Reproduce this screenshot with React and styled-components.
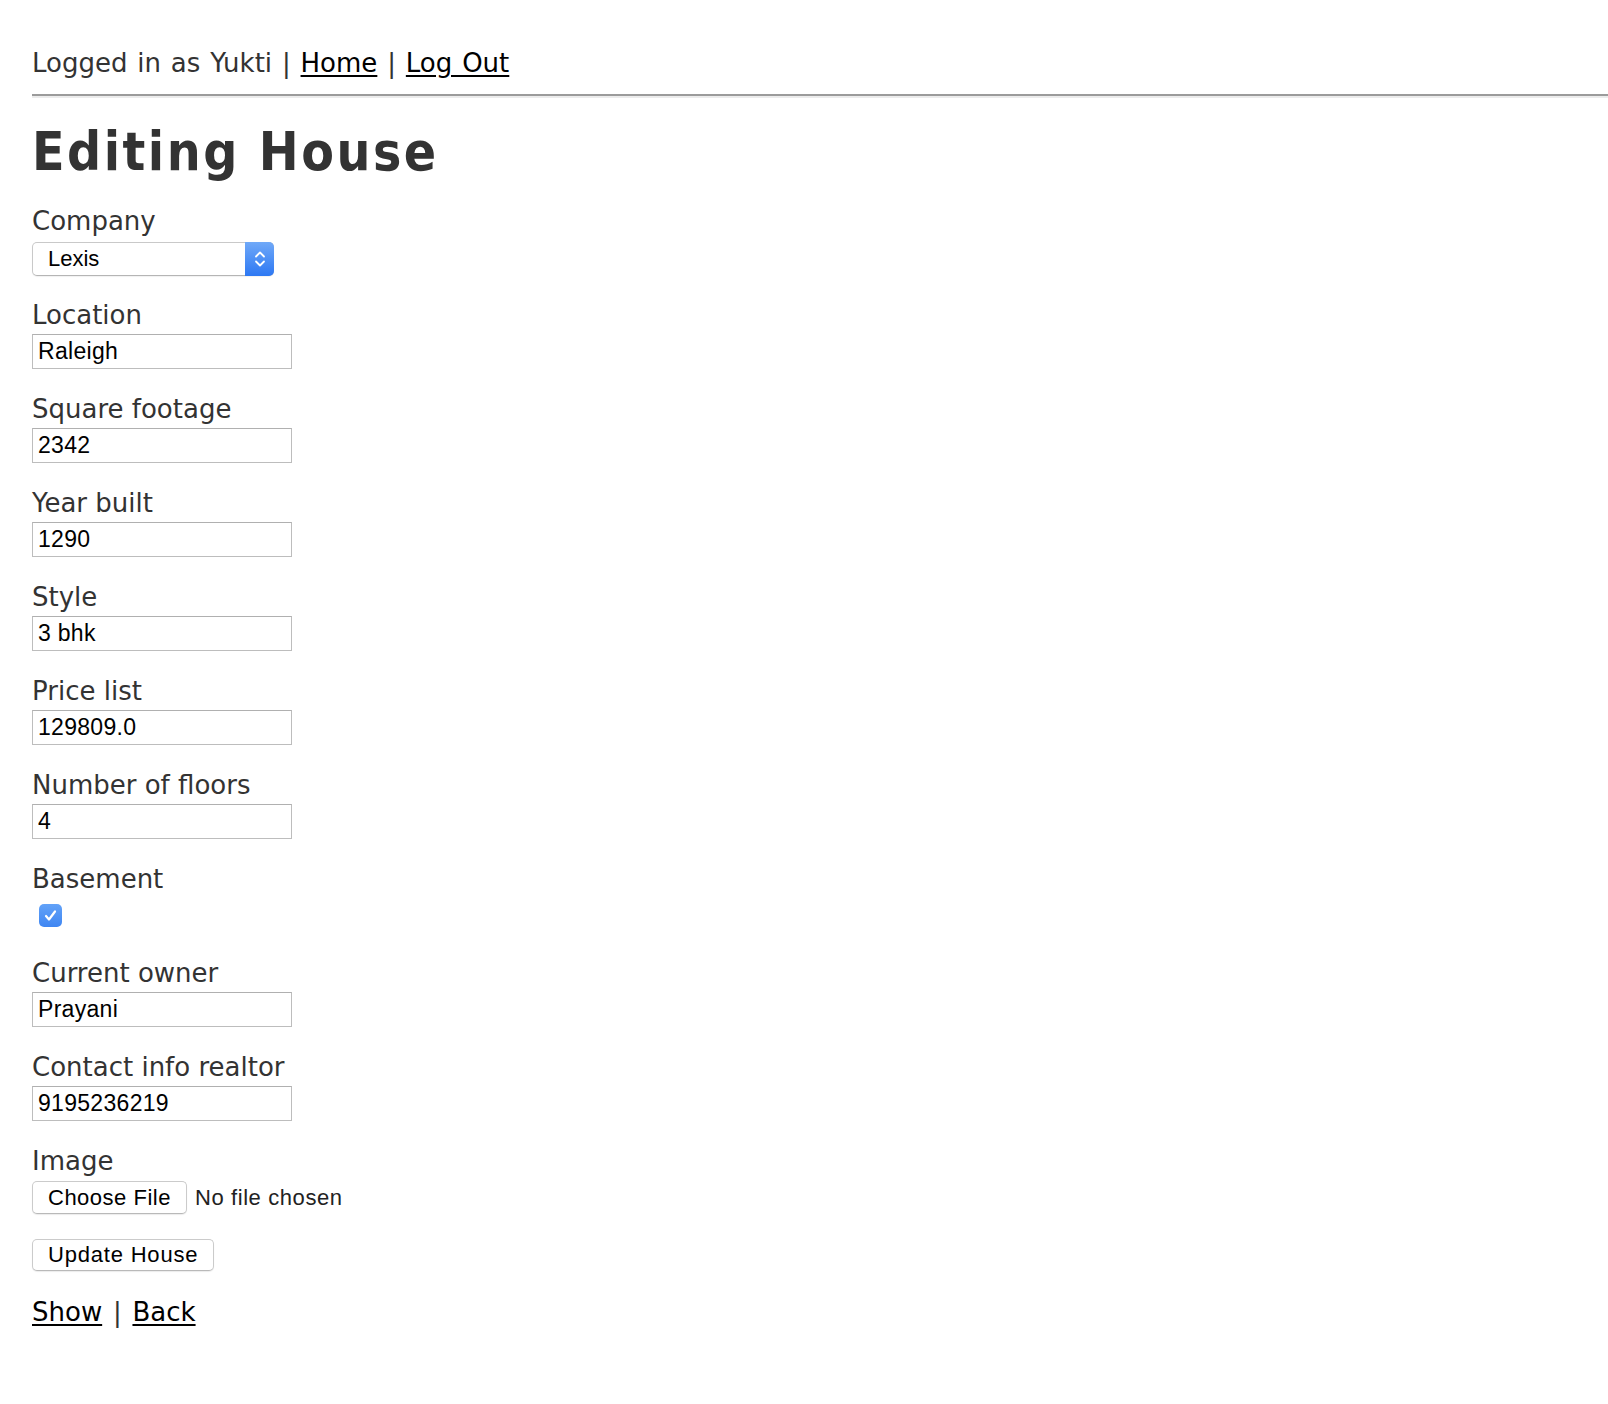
import React from 'react';
import styled, { createGlobalStyle } from 'styled-components';

const GlobalStyle = createGlobalStyle`
  html, body { margin: 0; padding: 0; background: #fff; }
  body { font-family: "DejaVu Sans", Verdana, sans-serif; color: #333; }
`;

const Page = styled.div`
  padding: 45px 0 60px 32px;
`;

const UserBar = styled.div`
  font-size: 26px;
  line-height: 36px;
  word-spacing: 1.6px;
  margin-bottom: 13px;
  color: #333;
`;

const Link = styled.a`
  color: #000;
  text-decoration: underline;
  text-underline-offset: 3px;
  cursor: pointer;
`;

const Rule = styled.hr`
  margin: 0;
  height: 0;
  border: none;
  border-top: 2px solid #9b9b9b;
  border-bottom: 2px solid #ececec;
`;

const Title = styled.h1`
  margin: 22px 0 19px;
  font-size: 53px;
  line-height: 64px;
  font-weight: bold;
  font-stretch: condensed;
  letter-spacing: 2.5px;
  color: #333;
`;

const Field = styled.div`
  margin-bottom: 22px;
`;

const Label = styled.label`
  display: block;
  font-size: 26px;
  line-height: 37px;
  color: #333;
`;

const TextInput = styled.input`
  box-sizing: border-box;
  display: block;
  width: 260px;
  height: 35px;
  margin: 0;
  padding: 0 4px 0 5px;
  border: 1px solid #bdbdbd;
  border-top-color: #b0b0b0;
  font-family: "Liberation Sans", Arial, sans-serif;
  font-size: 23px;
  letter-spacing: 0.3px;
  color: #000;
  background: #fff;
  outline: none;
`;

const SelectBox = styled.div`
  box-sizing: border-box;
  position: relative;
  display: flex;
  align-items: center;
  width: 242px;
  height: 34px;
  margin: 2px 0 -1px;
  padding-left: 15px;
  border: 1px solid #c9c9c9;
  border-bottom-color: #b5b5b5;
  border-radius: 5px;
  background: #fff;
  box-shadow: 0 1px 1px rgba(0, 0, 0, 0.06);
  font-family: "Liberation Sans", Arial, sans-serif;
  font-size: 22px;
  color: #000;
`;

const SelectArrow = styled.div`
  position: absolute;
  top: -1px;
  right: -1px;
  bottom: -1px;
  width: 29px;
  border-radius: 0 5px 5px 0;
  background: linear-gradient(#70a9f8, #2d78f3);
  display: flex;
  align-items: center;
  justify-content: center;
`;

const CheckRow = styled.div`
  height: 35px;
  display: flex;
  align-items: center;
  padding-left: 7px;
`;

const CheckBox = styled.span`
  width: 23px;
  height: 23px;
  border-radius: 5px;
  background: linear-gradient(#62a2f8, #3f86f2);
  display: flex;
  align-items: center;
  justify-content: center;
`;

const FileRow = styled.div`
  height: 35px;
  display: flex;
  align-items: center;
  gap: 8px;
`;

const Button = styled.button`
  box-sizing: border-box;
  height: ${(p) => p.$h}px;
  margin: 0;
  padding: 0 15px;
  border: 1px solid #cbcbcb;
  border-bottom-color: #b9b9b9;
  border-radius: 5px;
  background: #fff;
  box-shadow: 0 1px 1px rgba(0, 0, 0, 0.08);
  font-family: "Liberation Sans", Arial, sans-serif;
  font-size: 22px;
  letter-spacing: ${(p) => p.$ls}px;
  color: #000;
`;

const FileNote = styled.span`
  font-family: "Liberation Sans", Arial, sans-serif;
  font-size: 22px;
  letter-spacing: 0.6px;
  color: #222;
`;

const Actions = styled.div`
  height: 35px;
  display: flex;
  align-items: center;
  margin-bottom: 22px;
`;

const Footer = styled.div`
  font-size: 26px;
  line-height: 37px;
  word-spacing: 2.5px;
  color: #333;
`;

const fields = [
  ['Location', 'Raleigh'],
  ['Square footage', '2342'],
  ['Year built', '1290'],
  ['Style', '3 bhk'],
  ['Price list', '129809.0'],
  ['Number of floors', '4'],
];

const fields2 = [
  ['Current owner', 'Prayani'],
  ['Contact info realtor', '9195236219'],
];

function TextField({ label, value }) {
  return (
    <Field>
      <Label>{label}</Label>
      <TextInput type="text" defaultValue={value} />
    </Field>
  );
}

export default function App() {
  return (
    <>
      <GlobalStyle />
      <Page>
        <UserBar>
          Logged in as Yukti | <Link>Home</Link> | <Link>Log Out</Link>
        </UserBar>
        <Rule />
        <Title>Editing House</Title>

        <Field>
          <Label>Company</Label>
          <SelectBox>
            Lexis
            <SelectArrow>
              <svg width="12" height="20" viewBox="0 0 12 20" fill="none" stroke="#fff" strokeWidth="1.8" strokeLinecap="round" strokeLinejoin="round">
                <path d="M2 7.5 L6 3.5 L10 7.5" />
                <path d="M2 12.5 L6 16.5 L10 12.5" />
              </svg>
            </SelectArrow>
          </SelectBox>
        </Field>

        {fields.map(([l, v]) => (
          <TextField key={l} label={l} value={v} />
        ))}

        <Field>
          <Label>Basement</Label>
          <CheckRow>
            <CheckBox>
              <svg width="15" height="15" viewBox="0 0 15 15" fill="none" stroke="#fff" strokeWidth="2.2" strokeLinecap="round" strokeLinejoin="round">
                <path d="M3 8 L6 11.5 L12 3.5" />
              </svg>
            </CheckBox>
          </CheckRow>
        </Field>

        {fields2.map(([l, v]) => (
          <TextField key={l} label={l} value={v} />
        ))}

        <Field>
          <Label>Image</Label>
          <FileRow>
            <Button $h={33} $ls={0.5}>Choose File</Button>
            <FileNote>No file chosen</FileNote>
          </FileRow>
        </Field>

        <Actions>
          <Button $h={32} $ls={0.8}>Update House</Button>
        </Actions>

        <Footer>
          <Link>Show</Link> | <Link>Back</Link>
        </Footer>
      </Page>
    </>
  );
}
